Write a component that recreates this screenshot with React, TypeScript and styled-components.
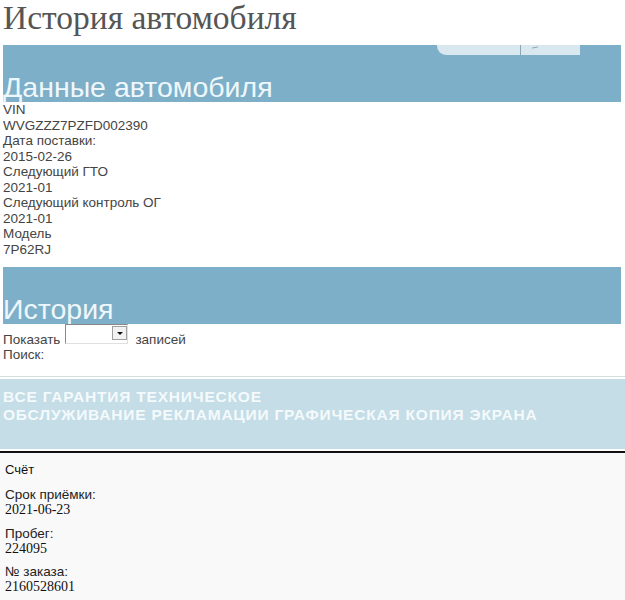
import React from 'react';
import styled, { createGlobalStyle } from 'styled-components';

const GlobalStyle = createGlobalStyle`
  html, body {
    margin: 0;
    padding: 0;
    background: #ffffff;
  }
  body {
    font-family: "Liberation Sans", Arial, sans-serif;
    width: 625px;
    overflow: hidden;
  }
`;

const Page = styled.div`
  width: 625px;
  height: 600px;
  overflow: hidden;
`;

const Top = styled.div`
  padding: 0 4px 0 3px;
`;

const PageTitle = styled.h1`
  margin: 0;
  height: 45px;
  font-family: "Liberation Serif", "Times New Roman", serif;
  font-weight: normal;
  font-size: 33.5px;
  line-height: 36px;
  color: #555555;
`;

const Band = styled.div`
  height: 57px;
  background: #7eafc8;
  display: flex;
  flex-direction: column;
  justify-content: space-between;
`;

const TabRow = styled.div`
  display: flex;
  justify-content: flex-end;
  padding-right: 41px;
`;

const Tab = styled.div`
  width: 143px;
  height: 10px;
  background: #d9e7ef;
  border-bottom-left-radius: 9px;
  display: flex;
  justify-content: flex-end;
`;

const TabPart = styled.div`
  width: 59px;
  height: 100%;
  border-left: 1px solid #8ea6b4;
  position: relative;
  &::after {
    content: '';
    position: absolute;
    left: 11px;
    top: 2px;
    width: 6px;
    height: 1px;
    background: #7f98a6;
    transform: rotate(-12deg);
  }
`;

const BandTitle = styled.h2`
  margin: auto 0 0;
  font-weight: normal;
  font-size: 28.5px;
  line-height: 28px;
  padding-bottom: 1px;
  color: #eef7fb;
`;

const InfoList = styled.div`
  margin-bottom: 10px;
`;

const InfoLine = styled.div`
  font-size: 13.5px;
  line-height: 15.5px;
  color: #444444;
`;

const Controls = styled.div`
  font-size: 13.5px;
  color: #444444;
  height: 52px;
`;

const ShowRow = styled.div`
  display: flex;
  align-items: flex-end;
  height: 23px;
  line-height: 15px;
`;

const SelectBox = styled.div`
  width: 63px;
  height: 20px;
  margin: 0 7px 0 5px;
  border: 1px solid #8a8a8a;
  border-right-color: #e0e0e0;
  border-bottom-color: #e0e0e0;
  background: #ffffff;
  display: flex;
  justify-content: flex-end;
  align-self: flex-start;
  box-sizing: border-box;
`;

const SelectArrow = styled.div`
  width: 15px;
  height: 14px;
  margin-top: 1px;
  background: #f2f2f2;
  border: 1px solid #a0a0a0;
  box-sizing: border-box;
  display: flex;
  align-items: center;
  justify-content: center;
  &::before {
    content: '';
    border-left: 3px solid transparent;
    border-right: 3px solid transparent;
    border-top: 3px solid #111111;
  }
`;

const SearchRow = styled.div`
  line-height: 15px;
`;

const Divider = styled.div`
  height: 1px;
  background: #d6dde0;
`;

const FilterBar = styled.div`
  margin-top: 2px;
  height: 70px;
  background: #c5dde6;
  box-sizing: border-box;
  padding: 9px 3px 0;
  font-weight: bold;
  font-size: 15.5px;
  letter-spacing: 0.8px;
  line-height: 18px;
  color: #f4fafc;
  text-transform: uppercase;
`;

const DarkRule = styled.div`
  height: 2px;
  margin-top: 2px;
  background: #111111;
`;

const Details = styled.div`
  background: #f9f9f9;
  padding: 9px 5px 20px;
  min-height: 150px;
`;

const Heading = styled.div`
  font-size: 13px;
  line-height: 15px;
  color: #111111;
  margin-bottom: 10px;
`;

const Field = styled.div`
  margin-bottom: 8px;
`;

const FieldLabel = styled.div`
  font-size: 13.5px;
  line-height: 15px;
  color: #222222;
`;

const FieldValue = styled.div`
  font-family: "Liberation Serif", "Times New Roman", serif;
  font-size: 14px;
  line-height: 15.5px;
  color: #111111;
`;

const carInfo = [
  'VIN',
  'WVGZZZ7PZFD002390',
  'Дата поставки:',
  '2015-02-26',
  'Следующий ГТО',
  '2021-01',
  'Следующий контроль ОГ',
  '2021-01',
  'Модель',
  '7P62RJ',
];

const fields = [
  { label: 'Срок приёмки:', value: '2021-06-23' },
  { label: 'Пробег:', value: '224095' },
  { label: '№ заказа:', value: '2160528601' },
];

function App() {
  return (
    <Page>
      <GlobalStyle />
      <Top>
        <PageTitle>История автомобиля</PageTitle>
        <Band>
          <TabRow>
            <Tab>
              <TabPart />
            </Tab>
          </TabRow>
          <BandTitle>Данные автомобиля</BandTitle>
        </Band>
        <InfoList>
          {carInfo.map((line, i) => (
            <InfoLine key={i}>{line}</InfoLine>
          ))}
        </InfoList>
        <Band>
          <BandTitle>История</BandTitle>
        </Band>
        <Controls>
          <ShowRow>
            Показать
            <SelectBox>
              <SelectArrow />
            </SelectBox>
            записей
          </ShowRow>
          <SearchRow>Поиск:</SearchRow>
        </Controls>
      </Top>
      <Divider />
      <FilterBar>
        Все Гарантия Техническое
        <br />
        обслуживание Рекламации Графическая копия экрана
      </FilterBar>
      <DarkRule />
      <Details>
        <Heading>Счёт</Heading>
        {fields.map(f => (
          <Field key={f.label}>
            <FieldLabel>{f.label}</FieldLabel>
            <FieldValue>{f.value}</FieldValue>
          </Field>
        ))}
      </Details>
    </Page>
  );
}

export default App;
